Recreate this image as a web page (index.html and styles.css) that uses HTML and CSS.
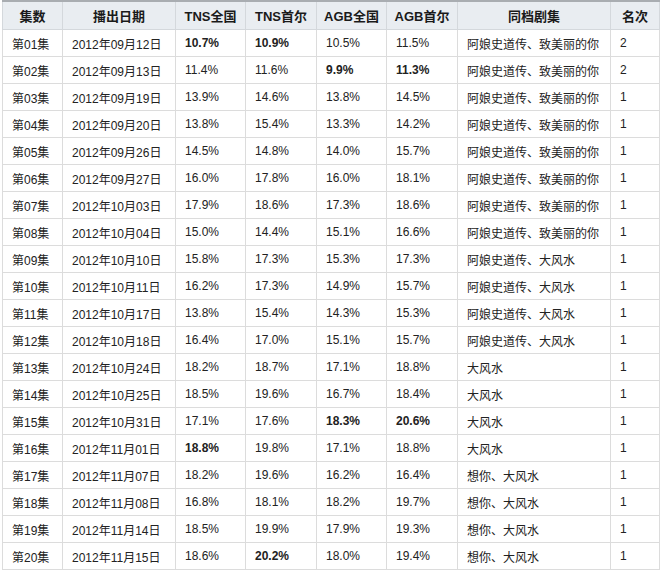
FILE: index.html
```html
<!DOCTYPE html>
<html lang="zh">
<head>
<meta charset="utf-8">
<link rel="stylesheet" href="styles.css">
</head>
<body>
<table class="ratings">
<colgroup>
<col class="c-ep"><col class="c-date"><col class="c-num"><col class="c-num2"><col class="c-num"><col class="c-num2"><col class="c-show"><col class="c-rank">
</colgroup>
<thead>
<tr><th>集数</th><th>播出日期</th><th>TNS全国</th><th>TNS首尔</th><th>AGB全国</th><th>AGB首尔</th><th>同档剧集</th><th>名次</th></tr>
</thead>
<tbody>
<tr><td>第01集</td><td>2012年09月12日</td><td><b>10.7%</b></td><td><b>10.9%</b></td><td>10.5%</td><td>11.5%</td><td>阿娘史道传、致美丽的你</td><td>2</td></tr>
<tr><td>第02集</td><td>2012年09月13日</td><td>11.4%</td><td>11.6%</td><td><b>9.9%</b></td><td><b>11.3%</b></td><td>阿娘史道传、致美丽的你</td><td>2</td></tr>
<tr><td>第03集</td><td>2012年09月19日</td><td>13.9%</td><td>14.6%</td><td>13.8%</td><td>14.5%</td><td>阿娘史道传、致美丽的你</td><td>1</td></tr>
<tr><td>第04集</td><td>2012年09月20日</td><td>13.8%</td><td>15.4%</td><td>13.3%</td><td>14.2%</td><td>阿娘史道传、致美丽的你</td><td>1</td></tr>
<tr><td>第05集</td><td>2012年09月26日</td><td>14.5%</td><td>14.8%</td><td>14.0%</td><td>15.7%</td><td>阿娘史道传、致美丽的你</td><td>1</td></tr>
<tr><td>第06集</td><td>2012年09月27日</td><td>16.0%</td><td>17.8%</td><td>16.0%</td><td>18.1%</td><td>阿娘史道传、致美丽的你</td><td>1</td></tr>
<tr><td>第07集</td><td>2012年10月03日</td><td>17.9%</td><td>18.6%</td><td>17.3%</td><td>18.6%</td><td>阿娘史道传、致美丽的你</td><td>1</td></tr>
<tr><td>第08集</td><td>2012年10月04日</td><td>15.0%</td><td>14.4%</td><td>15.1%</td><td>16.6%</td><td>阿娘史道传、致美丽的你</td><td>1</td></tr>
<tr><td>第09集</td><td>2012年10月10日</td><td>15.8%</td><td>17.3%</td><td>15.3%</td><td>17.3%</td><td>阿娘史道传、大风水</td><td>1</td></tr>
<tr><td>第10集</td><td>2012年10月11日</td><td>16.2%</td><td>17.3%</td><td>14.9%</td><td>15.7%</td><td>阿娘史道传、大风水</td><td>1</td></tr>
<tr><td>第11集</td><td>2012年10月17日</td><td>13.8%</td><td>15.4%</td><td>14.3%</td><td>15.3%</td><td>阿娘史道传、大风水</td><td>1</td></tr>
<tr><td>第12集</td><td>2012年10月18日</td><td>16.4%</td><td>17.0%</td><td>15.1%</td><td>15.7%</td><td>阿娘史道传、大风水</td><td>1</td></tr>
<tr><td>第13集</td><td>2012年10月24日</td><td>18.2%</td><td>18.7%</td><td>17.1%</td><td>18.8%</td><td>大风水</td><td>1</td></tr>
<tr><td>第14集</td><td>2012年10月25日</td><td>18.5%</td><td>19.6%</td><td>16.7%</td><td>18.4%</td><td>大风水</td><td>1</td></tr>
<tr><td>第15集</td><td>2012年10月31日</td><td>17.1%</td><td>17.6%</td><td><b>18.3%</b></td><td><b>20.6%</b></td><td>大风水</td><td>1</td></tr>
<tr><td>第16集</td><td>2012年11月01日</td><td><b>18.8%</b></td><td>19.8%</td><td>17.1%</td><td>18.8%</td><td>大风水</td><td>1</td></tr>
<tr><td>第17集</td><td>2012年11月07日</td><td>18.2%</td><td>19.6%</td><td>16.2%</td><td>16.4%</td><td>想你、大风水</td><td>1</td></tr>
<tr><td>第18集</td><td>2012年11月08日</td><td>16.8%</td><td>18.1%</td><td>18.2%</td><td>19.7%</td><td>想你、大风水</td><td>1</td></tr>
<tr><td>第19集</td><td>2012年11月14日</td><td>18.5%</td><td>19.9%</td><td>17.9%</td><td>19.3%</td><td>想你、大风水</td><td>1</td></tr>
<tr><td>第20集</td><td>2012年11月15日</td><td>18.6%</td><td><b>20.2%</b></td><td>18.0%</td><td>19.4%</td><td>想你、大风水</td><td>1</td></tr>
</tbody>
</table>
</body>
</html>
```
FILE: styles.css
```css
html, body {
  margin: 0;
  padding: 0;
  background: #ffffff;
}
body {
  padding-left: 2px;
  font-family: "Liberation Sans", "Noto Sans CJK SC", sans-serif;
  font-size: 12px;
  color: #222222;
}
.ratings {
  border-collapse: collapse;
  table-layout: fixed;
  width: 658px;
}
.c-ep { width: 60px; }
.c-date { width: 113px; }
.c-num { width: 70px; }
.c-num2 { width: 71px; }
.c-show { width: 153px; }
.c-rank { width: 49px; }
.ratings th {
  height: 27px;
  padding: 0;
  background: #e9edf1;
  border: 1px solid #d4d8dc;
  border-top: 2px solid #a9adb1;
  font-size: 13px;
  font-weight: bold;
  color: #1a1a1a;
  text-align: center;
}
.ratings td {
  height: 26px;
  padding: 0 0 0 9px;
  border: 1px solid #dcdcdc;
  text-align: left;
  white-space: nowrap;
}
.ratings td b {
  font-weight: bold;
}
```
